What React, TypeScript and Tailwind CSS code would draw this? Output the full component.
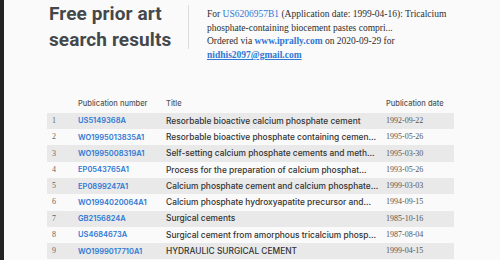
import React from 'react';

const rows = [
  { n: '1', id: 'US5149368A', title: 'Resorbable bioactive calcium phosphate cement', date: '1992-09-22' },
  { n: '2', id: 'WO1995013835A1', title: 'Resorbable bioactive phosphate containing cemen...', date: '1995-05-26' },
  { n: '3', id: 'WO1995008319A1', title: 'Self-setting calcium phosphate cements and meth...', date: '1995-03-30' },
  { n: '4', id: 'EP0543765A1', title: 'Process for the preparation of calcium phosphat...', date: '1993-05-26' },
  { n: '5', id: 'EP0899247A1', title: 'Calcium phosphate cement and calcium phosphate...', date: '1999-03-03' },
  { n: '6', id: 'WO1994020064A1', title: 'Calcium phosphate hydroxyapatite precursor and...', date: '1994-09-15' },
  { n: '7', id: 'GB2156824A', title: 'Surgical cements', date: '1985-10-16' },
  { n: '8', id: 'US4684673A', title: 'Surgical cement from amorphous tricalcium phosp...', date: '1987-08-04' },
  { n: '9', id: 'WO1999017710A1', title: 'HYDRAULIC SURGICAL CEMENT', date: '1999-04-15' },
];

const serif = "font-['Liberation_Serif',serif]";
const sans = "font-['Inter',sans-serif]";

export default function App() {
  return (
    <div className="w-[500px] h-[260px] bg-[#fafafa] flex overflow-hidden">
      <div className="w-[4px] shrink-0 bg-[#232323]" />
      <div className="flex-1 pl-[43px] pr-[42px]">
        <div className="flex pt-[1px]">
          <h1 className="font-['Roboto',sans-serif] w-[141px] pl-[2px] text-[19px] leading-[26px] font-bold tracking-[0.1px] text-[#45484b] whitespace-nowrap">
            Free prior art
            <br />
            search results
          </h1>
          <div className="mt-[4px] h-[44px] border-l border-[#dcdcdc]" />
          <p className={`${serif} pl-[18px] pt-[7px] text-[9.5px] leading-[13.7px] text-[#2e2e2e] whitespace-nowrap`}>
            For <span className="text-[#2f78d4]">US6206957B1</span> (Application date: 1999-04-16): Tricalcium
            <br />
            phosphate-containing biocement pastes compri...
            <br />
            Ordered via <span className="font-bold text-[#2f78d4]">www.iprally.com</span> on 2020-09-29 for
            <br />
            <span className="font-bold text-[#2f78d4] underline">nidhis2097@gmail.com</span>
          </p>
        </div>

        <div className="mt-[34px] w-[407px]">
          <div className={`${sans} flex h-[14px] items-center text-[7.5px] font-medium text-[#555]`}>
            <div className="w-[31px]" />
            <div className="w-[88px]">Publication number</div>
            <div className="flex-1">Title</div>
            <div className="w-[68px]">Publication date</div>
          </div>
          <div className="mt-[2px]">
            {rows.map((r, i) => (
              <div
                key={r.n}
                className={`flex h-[16.3px] items-center ${i % 2 === 0 ? 'bg-[#e9e9e9]' : ''}`}
              >
                <div className={`${serif} w-[31px] pl-[5px] text-[8px] text-[#666]`}>{r.n}</div>
                <div className={`${sans} w-[88px] text-[7.5px] font-semibold text-[#2f78d4]`}>{r.id}</div>
                <div className={`${sans} flex-1 text-[8.4px] font-medium text-[#333] whitespace-nowrap`}>{r.title}</div>
                <div className={`${serif} w-[68px] text-[8px] text-[#555]`}>{r.date}</div>
              </div>
            ))}
          </div>
        </div>
      </div>
    </div>
  );
}
